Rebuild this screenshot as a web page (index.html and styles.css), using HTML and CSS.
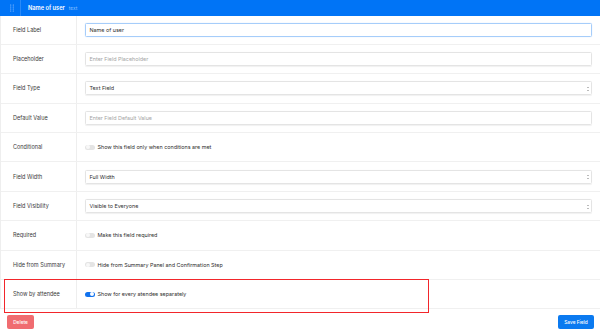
FILE: index.html
```html
<!DOCTYPE html>
<html lang="en">
<head>
    <meta charset="UTF-8">
    <title>Edit Field</title>
    <link rel="stylesheet" href="styles.css">
</head>
<body>
    <div class="panel">
        <div class="panel-head">
            <span class="drag">
                <svg width="4" height="8" viewBox="0 0 4 8"><g fill="#9cc6ff"><circle cx="0.7" cy="1" r="0.6"/><circle cx="3.3" cy="1" r="0.6"/><circle cx="0.7" cy="3" r="0.6"/><circle cx="3.3" cy="3" r="0.6"/><circle cx="0.7" cy="5" r="0.6"/><circle cx="3.3" cy="5" r="0.6"/><circle cx="0.7" cy="7" r="0.6"/><circle cx="3.3" cy="7" r="0.6"/></g></svg>
            </span>
            <span class="title">Name of user</span>
            <span class="type">text</span>
        </div>

        <div class="rows">
            <div class="row">
                <div class="label">Field Label</div>
                <div class="value"><div class="input focus">Name of user</div></div>
            </div>
            <div class="row">
                <div class="label">Placeholder</div>
                <div class="value"><div class="input empty">Enter Field Placeholder</div></div>
            </div>
            <div class="row">
                <div class="label">Field Type</div>
                <div class="value"><div class="input select">Text Field<span class="arrow"></span></div></div>
            </div>
            <div class="row">
                <div class="label">Default Value</div>
                <div class="value"><div class="input empty">Enter Field Default Value</div></div>
            </div>
            <div class="row">
                <div class="label">Conditional</div>
                <div class="value"><span class="toggle"></span>Show this field only when conditions are met</div>
            </div>
            <div class="row">
                <div class="label">Field Width</div>
                <div class="value"><div class="input select">Full Width<span class="arrow"></span></div></div>
            </div>
            <div class="row">
                <div class="label">Field Visibility</div>
                <div class="value"><div class="input select">Visible to Everyone<span class="arrow"></span></div></div>
            </div>
            <div class="row">
                <div class="label">Required</div>
                <div class="value"><span class="toggle"></span>Make this field required</div>
            </div>
            <div class="row">
                <div class="label">Hide from Summary</div>
                <div class="value"><span class="toggle"></span>Hide from Summary Panel and Confirmation Step</div>
            </div>
            <div class="row">
                <div class="label">Show by attendee</div>
                <div class="value"><span class="toggle on"></span>Show for every atendee separately</div>
            </div>
            <div class="highlight"></div>
        </div>

        <div class="footer">
            <button class="btn delete">Delete</button>
            <button class="btn save">Save Field</button>
        </div>
    </div>
</body>
</html>
```

FILE: styles.css
```css
body {
    margin: 0;
    font-family: Inter, "Noto Sans", sans-serif;
    font-size: 5.4px;
    color: #333;
    background: #fff;
}
.panel {
    width: 600px;
}
.panel-head {
    height: 15.5px;
    background-color: #0074f6;
    display: flex;
    align-items: center;
    color: #fff;
}
.drag {
    width: 21px;
    height: 15.5px;
    display: flex;
    align-items: center;
    justify-content: center;
    box-sizing: border-box;
    border-right: 1px solid #2a8af8;
    padding-left: 3px;
}
.title {
    margin-left: 7px;
    font-weight: 600;
    font-size: 5.7px;
}
.type {
    margin-left: 4px;
    color: #8cc0ff;
    font-size: 4.8px;
}
.rows {
    position: relative;
    border-left: 1px solid #eee;
}
.row {
    display: flex;
    height: 29.4px;
    border-bottom: 1px solid #f0f0f0;
    box-sizing: border-box;
}
.label {
    width: 76px;
    box-sizing: border-box;
    border-right: 1px solid #eee;
    padding-left: 12px;
    display: flex;
    align-items: center;
    font-size: 5.5px;
    color: #3a3a3a;
}
.value {
    flex: 1;
    display: flex;
    align-items: center;
    padding: 0 8px 0 8px;
    color: #2e2e2e;
}
.input {
    width: 100%;
    height: 14px;
    box-sizing: border-box;
    border: 1px solid #e4e4e4;
    border-radius: 1.5px;
    box-shadow: 0 0.5px 1px rgba(0, 0, 0, 0.06);
    display: flex;
    align-items: center;
    padding-left: 3.5px;
    color: #2e2e2e;
    position: relative;
}
.input.focus {
    border-color: #a6cdfa;
    box-shadow: 0 0 1px rgba(0, 116, 246, 0.3);
}
.input.empty {
    color: #a5a5a5;
}
.arrow {
    position: absolute;
    right: 2px;
    top: 4.5px;
    width: 2px;
    height: 4px;
    border-top: 1px solid #bbb;
    border-bottom: 1px solid #bbb;
    box-sizing: border-box;
}
.toggle {
    width: 9.5px;
    height: 5px;
    border-radius: 3px;
    background: #e4e4e4;
    position: relative;
    margin-right: 3px;
    flex-shrink: 0;
}
.toggle::after {
    content: "";
    position: absolute;
    left: 0.5px;
    top: 0.5px;
    width: 4px;
    height: 4px;
    border-radius: 50%;
    background: #f8f8f8;
}
.toggle.on {
    background: #1172ee;
}
.toggle.on::after {
    left: 5px;
    background: #fff;
}
.highlight {
    position: absolute;
    left: 3px;
    top: 263px;
    width: 425px;
    height: 34px;
    border: 1.5px solid #f2262b;
    box-sizing: border-box;
}
.footer {
    display: flex;
    justify-content: space-between;
    padding: 6px 6px 0 7px;
}
.btn {
    height: 14px;
    border: none;
    border-radius: 2px;
    color: #fff;
    font-family: Inter, "Noto Sans", sans-serif;
    font-size: 4.8px;
    font-weight: 500;
    padding: 0 4px;
}
.delete {
    background-color: #f06c70;
    width: 27px;
}
.save {
    background-color: #0b7af0;
    width: 36px;
}
```
